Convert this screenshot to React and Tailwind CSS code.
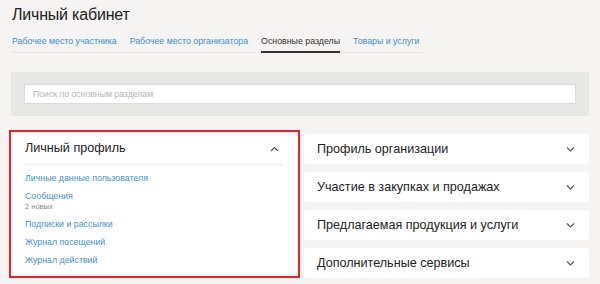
import React from "react";

const tabs = [
  { label: "Рабочее место участника" },
  { label: "Рабочее место организатора" },
  { label: "Основные разделы", active: true },
  { label: "Товары и услуги" },
];

const links = [
  { label: "Личные данные пользователя" },
  { label: "Сообщения", note: "2 новых" },
  { label: "Подписки и рассылки" },
  { label: "Журнал посещений" },
  { label: "Журнал действий" },
];

const sections = [
  "Профиль организации",
  "Участие в закупках и продажах",
  "Предлагаемая продукция и услуги",
  "Дополнительные сервисы",
];

function Chevron({ up }) {
  return (
    <svg width="9" height="6" viewBox="0 0 9 6" className="text-[#555]">
      <path
        d={up ? "M1 5 L4.5 1.5 L8 5" : "M1 1.5 L4.5 5 L8 1.5"}
        fill="none"
        stroke="currentColor"
        strokeWidth="1.2"
      />
    </svg>
  );
}

export default function App() {
  return (
    <div className="w-[600px] h-[284px] overflow-hidden bg-[#f5f4f2] font-['Liberation_Sans',Arial,sans-serif] text-[#222]">
      {/* Заголовок */}
      <h1 className="pl-3 pt-[4px] text-[16px] leading-[22px] tracking-[-0.2px]">Личный кабинет</h1>

      {/* Вкладки */}
      <div className="ml-3 mt-[9px] flex w-[410px] gap-[13px] border-b border-[#e6e5e3]">
        {tabs.map((t) => (
          <div
            key={t.label}
            className={
              "shrink-0 whitespace-nowrap pb-[4px] text-[8.8px] leading-[12px] " +
              (t.active ? "border-b-2 border-[#333] text-[#333] -mb-px" : "text-[#3f8fcf]")
            }
          >
            {t.label}
          </div>
        ))}
      </div>

      {/* Поиск */}
      <div className="mx-[11px] mt-[19px] rounded-[3px] bg-[#e7e7e6] px-[13px] py-[12px]">
        <div className="h-[20px] border border-[#dcdcdc] bg-white pl-[8px] text-[8.7px] leading-[18px] text-[#b5b5b5]">
          Поиск по основным разделам
        </div>
      </div>

      {/* Разделы */}
      <div className="mt-[14px] flex gap-[4px] pl-[9px]">
        <div className="w-[291px] border-2 border-[#e3242b] p-px">
          <div className="h-[141px] rounded-[3px] bg-white px-[13px]">
            <div className="flex h-[32px] items-center justify-between border-b border-[#eaeaea] pr-[5px]">
              <span className="text-[12.6px]">Личный профиль</span>
              <Chevron up />
            </div>
            <div className="flex flex-col gap-[6px] pt-[7px]">
              {links.map((l) => (
                <div key={l.label}>
                  <div className="text-[8.8px] leading-[12px] text-[#3f8fcf]">{l.label}</div>
                  {l.note && <div className="text-[7.5px] leading-[10px] text-[#888]">{l.note}</div>}
                </div>
              ))}
            </div>
          </div>
        </div>

        <div className="flex w-[285px] flex-col gap-[8px] pt-[4px]">
          {sections.map((s) => (
            <div
              key={s}
              className="flex h-[30px] items-center justify-between rounded-[3px] bg-white pl-[13px] pr-[14px]"
            >
              <span className="text-[12.6px]">{s}</span>
              <Chevron />
            </div>
          ))}
        </div>
      </div>
    </div>
  );
}
